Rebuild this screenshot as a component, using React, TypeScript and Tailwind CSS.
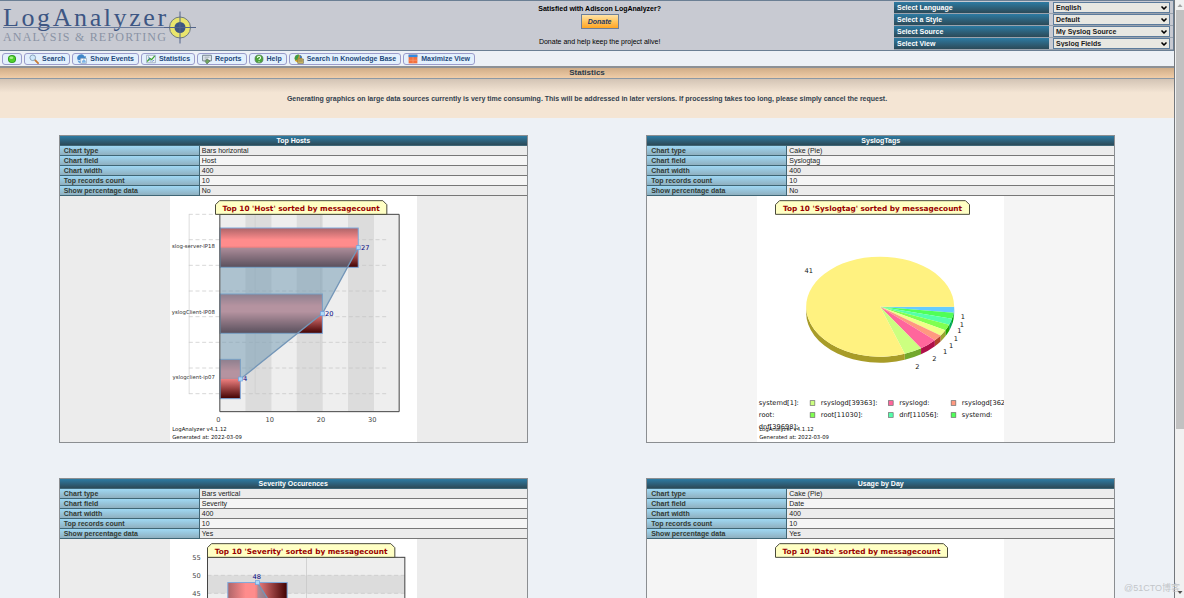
import type { ReactNode } from 'react';
import { ChevronDown } from 'lucide-react';

// Toolbar icons, drawn on a 16x16 grid
const icons: Record<string, ReactNode> = {
  dot: (
    <>
      <circle cx="8" cy="8" r="6.5" fill="#2f9e1c" />
      <circle cx="8" cy="8" r="5" fill="#4fd02c" />
      <ellipse cx="7" cy="6" rx="3" ry="2" fill="#a5f08a" />
    </>
  ),
  search: (
    <>
      <path d="M9 9l5.5 5.5" stroke="#c97b35" strokeWidth="3" strokeLinecap="round" />
      <circle cx="6" cy="6" r="4.5" fill="#cfe8fa" stroke="#8aa4bd" strokeWidth="1.6" />
    </>
  ),
  events: (
    <>
      <path d="M1 9a6 6 0 0 1 11-5l2-1v6H8l2-2a3.500 3.500 0 0 0-5 3z" fill="#3f86c8" />
      <path d="M6 7h9v8H6z" fill="#fff" stroke="#7f95ab" />
      <path d="M8 14v-3l3-3 3 3v3z" fill="#7db4e6" />
      <path d="M1 10a5 5 0 0 0 4 5l1-3z" fill="#6aa6dc" />
    </>
  ),
  stats: (
    <>
      <path d="M1 2h14v12H1z" fill="#f4f8fc" stroke="#7b8fa3" />
      <path d="M2 12l4-5 3 2 5-6" fill="none" stroke="#3da535" strokeWidth="2" />
      <path d="M4 4l3 8M9 12l4-2" fill="none" stroke="#4d79b8" strokeWidth="1.300" />
    </>
  ),
  reports: (
    <>
      <path d="M1 2h14v9H1z" fill="#e6edf2" stroke="#6f7f8c" strokeWidth="1.500" />
      <path d="M4 5h8M4 8h5" stroke="#6f7f8c" />
      <path d="M8 8l5 3-5 5-3-4z" fill="#6fa560" stroke="#5d6f5c" />
    </>
  ),
  help: (
    <>
      <circle cx="8" cy="8" r="6.500" fill="#4ba53a" stroke="#5c7460" />
      <path d="M5.500 6.500c0-3.500 5-3.500 5-.5 0 2-2.500 2-2.500 3.500M8 11.500v1.500" fill="none" stroke="#e8ffe0" strokeWidth="1.700" />
    </>
  ),
  knowledge: (
    <>
      <circle cx="7" cy="7" r="6" fill="#f0a818" />
      <path d="M1 7a6 6 0 0 1 7-6l-1 5-4 5z" fill="#3a9c4c" />
      <path d="M9 1a6 6 0 0 1 4 5l-4 1z" fill="#3c78c4" />
      <path d="M6 8h9v7H6z" fill="#f1d36b" stroke="#5a5c4a" />
      <path d="M7 10h7M7 12.500h7" stroke="#5a5c4a" />
    </>
  ),
  maximize: (
    <>
      <path d="M1 1h14v14H1z" fill="#f4703c" />
      <path d="M1 1h14v4H1z" fill="#2f8ae0" />
      <path d="M8 5v10M1 10h14" stroke="#f9a07c" />
    </>
  ),
};

const menu = [
  { icon: 'dot', label: '' },
  { icon: 'search', label: 'Search' },
  { icon: 'events', label: 'Show Events' },
  { icon: 'stats', label: 'Statistics' },
  { icon: 'reports', label: 'Reports' },
  { icon: 'help', label: 'Help' },
  { icon: 'knowledge', label: 'Search in Knowledge Base' },
  { icon: 'maximize', label: 'Maximize View' },
];

const selectors = [
  { id: 'language', label: 'Select Language', value: 'English' },
  { id: 'style', label: 'Select a Style', value: 'Default' },
  { id: 'source', label: 'Select Source', value: 'My Syslog Source' },
  { id: 'view', label: 'Select View', value: 'Syslog Fields' },
];

function Logo() {
  return (
    <svg width="200" height="49" viewBox="0 0 200 49" aria-label="LogAnalyzer">
      <text x="3" y="25" fill="#3d5683" fontSize="26" className="font-['Liberation_Serif',serif] tracking-widest">
        LogAnalyzer
      </text>
      <text x="3" y="40" fill="#8a93a5" fontSize="12" className="font-['Liberation_Serif',serif] tracking-widest">
        ANALYSIS &amp; REPORTING
      </text>
      <path d="M3 26.500H170" stroke="#6b7c9c" />
      <circle cx="180" cy="26.500" r="10.500" fill="#e9e56c" stroke="#6f7b80" />
      <circle cx="180" cy="26.500" r="5.500" fill="#3d5683" />
      <path d="M164 26.500h32M180 10.500v32" stroke="#53658a" />
    </svg>
  );
}

function Header() {
  return (
    <header className="flex h-[51px] border-t border-b border-[#6b7f94] bg-[#c8cad2]">
      <div className="w-[26%] shrink-0">
        <Logo />
      </div>
      <div className="flex flex-1 flex-col items-center pt-[3px] text-black">
        <p className="font-bold leading-[10px]">Satisfied with Adiscon LogAnalyzer?</p>
        <button className="h-[15px] w-[38px] border border-[#6d7f99] bg-linear-to-b from-[#ffe3a6] via-[#ffc45a] to-[#ffa51f] font-bold italic leading-none text-[#1d3766]">
          Donate
        </button>
        <p className="mt-2 leading-[10px]">Donate and help keep the project alive!</p>
      </div>
      <div className="grid w-[280px] shrink-0 grid-rows-4 border-r border-[#6b7f94] pt-px">
        {selectors.map((s) => (
          <div key={s.id} className="flex items-stretch gap-1 border-b border-[#9aa3ae] pr-[3px]">
            <label
              htmlFor={s.id}
              className="flex flex-1 items-center bg-linear-to-b from-[#2c7ba3] to-[#2b4a58] pl-[3px] font-bold leading-none text-white"
            >
              {s.label}
            </label>
            <div className="relative w-[117px]">
              <select
                id={s.id}
                className="block h-full w-full appearance-none border border-[#5c7c9c] bg-[#e8e8e2] pl-[2px] font-bold leading-none text-[#1a1a1a]"
              >
                <option>{s.value}</option>
              </select>
              <ChevronDown className="pointer-events-none absolute top-[2px] right-[2px] size-2 text-black" strokeWidth={5} />
            </div>
          </div>
        ))}
      </div>
    </header>
  );
}

function Toolbar() {
  return (
    <nav className="flex h-[15px] items-center gap-[2px] pl-[2px] leading-none">
      {menu.map((m) => (
        <a
          key={m.icon}
          href="#"
          aria-label={m.label || 'Status'}
          className="flex h-3 items-center gap-[3px] rounded-[3px] border border-[#9a9ccb] bg-[#e3f0fd] px-1 font-bold whitespace-nowrap text-[#1f4a7c]"
        >
          <svg viewBox="0 0 16 16" className="size-[10px] shrink-0">
            {icons[m.icon]}
          </svg>
          {m.label}
        </a>
      ))}
    </nav>
  );
}

function ChartTitle({ x, width, children }: { x: number; width: number; children: string }) {
  return (
    <>
      <path
        d={`M${x} 27.500V13l6-6h${width - 12}l6 6v14.500z`}
        fill="#ffffc4"
        stroke="#4a4a3a"
        strokeWidth="1.500"
      />
      <text x={x + width / 2} y="23" fontSize="11" fontWeight="bold" textAnchor="middle" fill="#990000">
        {children}
      </text>
    </>
  );
}

function ChartFooter() {
  return (
    <g fontSize="8" fill="#111">
      <text x="3" y="353">LogAnalyzer v4.1.12</text>
      <text x="3" y="364">Generated at: 2022-03-09</text>
    </g>
  );
}

function HostsChart() {
  const bars = [
    { name: 'slog-server-IP18', value: 27, y: 48 },
    { name: 'yslogClient-IP08', value: 20, y: 147 },
    { name: 'yslogclient-ip07', value: 4, y: 245 },
  ];
  const px = (v: number) => 74.5 + v * 7.69;

  return (
    <>
      <defs>
        <linearGradient id="barDown" x1="0" y1="0" x2="0" y2="1">
          <stop offset="0" stopColor="#ad6468" />
          <stop offset="0.3" stopColor="#ff8c8c" />
          <stop offset="0.45" stopColor="#ff8c8c" />
          <stop offset="1" stopColor="#400000" />
        </linearGradient>
      </defs>
      <path d="M74.500 27.500h269v296h-269z" fill="#eee" />
      {[5, 15, 25].map((v) => (
        <rect key={v} x={px(v)} y="27.500" width="39" height="296" fill="#dcdcdc" />
      ))}
      <path d="M28.500 27.500v269M127.500 27.500v269M226 27.500v269" stroke="#ccc" />
      {[27.5, 65.5, 104, 142.5, 181, 219.5, 258, 296.5].map((y) => (
        <path key={y} d={`M28 ${y}h296`} stroke="#c4c4c4" strokeDasharray="6 4" />
      ))}
      {bars.map((b) => (
        <rect
          key={b.name}
          x="75"
          y={b.y}
          width={px(b.value) - 75}
          height="59"
          fill="url(#barDown)"
          stroke="#7fa9dc"
          strokeWidth="1.500"
        />
      ))}
      <path d="M75 77.500H282L228.500 176 105.500 274.500H75z" fill="#7299b2" fillOpacity="0.52" />
      <path d="M282 77.500L228.500 176 105.500 274.500" fill="none" stroke="#7496b8" strokeWidth="2" />
      <path d="M74.500 27.500h269v296h-269z" fill="none" stroke="#444" strokeWidth="1.500" />
      {bars.map((b) => (
        <g key={b.name}>
          <rect x={px(b.value) - 3} y={b.y + 26.5} width="6" height="6" fill="#add8f6" stroke="#6c9ee0" />
          <text x={px(b.value) + 4} y={b.y + 33} fontSize="10" fill="#00007f">
            {b.value}
          </text>
          <text x="67" y={b.y + 30} fontSize="8" textAnchor="end" fill="#333">
            {b.name}
          </text>
        </g>
      ))}
      {[0, 10, 20, 30].map((v) => (
        <text key={v} x={px(v) - 2} y="339" fontSize="10" textAnchor="middle" fill="#444">
          {v}
        </text>
      ))}
      <ChartTitle x={68} width={257}>
        Top 10 'Host' sorted by messagecount
      </ChartTitle>
      <ChartFooter />
    </>
  );
}

// Slices run clockwise from three o'clock
const slices = [
  { value: 1, color: '#66ccff', side: '#1f86b8', lx: 308.5, ly: 181 },
  { value: 1, color: '#50ff58', side: '#00a80c', lx: 307, ly: 192 },
  { value: 1, color: '#55ffaa', side: '#00a858', lx: 303.5, ly: 202 },
  { value: 1, color: '#80ff50', side: '#22a400', lx: 298, ly: 213.5 },
  { value: 1, color: '#f0ff88', side: '#9ca430', lx: 291, ly: 223.5 },
  { value: 1, color: '#ff9980', side: '#b0452c', lx: 282, ly: 233 },
  { value: 2, color: '#ff669c', side: '#b00f4a', lx: 266, ly: 244 },
  { value: 2, color: '#ccff80', side: '#72a82c', lx: 240.5, ly: 256 },
  { value: 41, color: '#fff280', side: '#a89c28', lx: 77.5, ly: 112 },
];

const CX = 184.5;
const CY = 166;
const RX = 111;
const RY = 75;

function edge(angle: number, drop = 0) {
  return `${CX + RX * Math.cos(angle)} ${CY + RY * Math.sin(angle) + drop}`;
}

function TagsChart() {
  const total = slices.reduce((sum, s) => sum + s.value, 0);
  let turn = 0;
  const arcs = slices.map((s) => {
    const start = (turn / total) * 2 * Math.PI;
    turn += s.value;
    return { ...s, start, end: (turn / total) * 2 * Math.PI };
  });
  const legend = [
    [
      { text: 'systemd[1]:', color: '' },
      { text: 'rsyslogd[39363]:', color: '#ccff80' },
      { text: 'rsyslogd:', color: '#ff669c' },
      { text: 'rsyslogd[362', color: '#ff9980' },
    ],
    [
      { text: 'root:', color: '' },
      { text: 'root[11030]:', color: '#80ff50' },
      { text: 'dnf[11056]:', color: '#55ffaa' },
      { text: 'systemd:', color: '#50ff58' },
    ],
    [{ text: 'dnf[39698]:', color: '' }],
  ];
  const columns = [2.5, 95.5, 213, 307];

  return (
    <>
      {arcs.map((a) => {
        const end = Math.min(a.end, Math.PI);
        return (
          <path
            key={a.color}
            d={`M${edge(a.start)}A${RX} ${RY} 0 0 1 ${edge(end)}L${edge(end, 9)}A${RX} ${RY} 0 0 0 ${edge(a.start, 9)}z`}
            fill={a.side}
          />
        );
      })}
      {arcs.map((a) => (
        <path
          key={a.color}
          d={`M${CX} ${CY}L${edge(a.start)}A${RX} ${RY} 0 ${a.value > 25 ? 1 : 0} 1 ${edge(a.end)}z`}
          fill={a.color}
        />
      ))}
      {arcs.map((a) => (
        <text key={a.color} x={a.lx} y={a.ly + 4} fontSize="10" textAnchor="middle" fill="#111">
          {a.value}
        </text>
      ))}
      {legend.map((row, r) =>
        row.map((item, c) => (
          <g key={item.text}>
            {item.color && (
              <rect x={columns[c] - 16} y={307 + r * 18} width="7" height="7" fill={item.color} stroke="#666" />
            )}
            <text x={columns[c]} y={313.5 + r * 18} fontSize="10" fill="#111">
              {item.text}
            </text>
          </g>
        ))
      )}
      <ChartTitle x={27.5} width={291}>
        Top 10 'Syslogtag' sorted by messagecount
      </ChartTitle>
      <ChartFooter />
    </>
  );
}

function SeverityChart() {
  const ticks = [55, 50, 45, 40, 35, 30, 25, 20, 15, 10, 5, 0];
  const py = (v: number) => 27.5 + (55 - v) * 5.4;

  return (
    <>
      <defs>
        <linearGradient id="barAcross">
          <stop offset="0" stopColor="#ad6468" />
          <stop offset="0.3" stopColor="#ff8c8c" />
          <stop offset="0.45" stopColor="#ff8c8c" />
          <stop offset="1" stopColor="#400000" />
        </linearGradient>
      </defs>
      <rect x="56" y="27.500" width="296" height="297" fill="#eee" />
      {[50, 40, 30, 20, 10].map((v) => (
        <rect key={v} x="56" y={py(v)} width="296" height="27" fill="#dcdcdc" />
      ))}
      {ticks.map((v) => (
        <g key={v}>
          <path d={`M56 ${py(v)}h296`} stroke="#c4c4c4" strokeDasharray="6 4" />
          <text x="46" y={py(v) + 4} fontSize="10" textAnchor="end" fill="#444">
            {v}
          </text>
        </g>
      ))}
      <path d="M204.500 27.500v297" stroke="#c4c4c4" />
      <rect x="86.500" y={py(48)} width="89" height={py(0) - py(48)} fill="url(#barAcross)" stroke="#7fa9dc" strokeWidth="1.500" />
      <rect x="234.500" y={py(5)} width="89" height={py(0) - py(5)} fill="url(#barAcross)" stroke="#7fa9dc" strokeWidth="1.500" />
      <path d="M131 65.500L279 297.500V324.500H131z" fill="#7299b2" fillOpacity="0.52" />
      <path d="M131 65.500L279 297.500" stroke="#7496b8" strokeWidth="2" />
      <rect x="128" y="62.500" width="6" height="6" fill="#add8f6" stroke="#6c9ee0" />
      <text x="130" y="60" fontSize="10" textAnchor="middle" fill="#00007f">48</text>
      <rect x="56" y="27.500" width="296" height="297" fill="none" stroke="#444" strokeWidth="1.500" />
      <ChartTitle x={56} width={281}>
        Top 10 'Severity' sorted by messagecount
      </ChartTitle>
      <ChartFooter />
    </>
  );
}

function UsageChart() {
  return (
    <>
      <ChartTitle x={27.5} width={258}>
        Top 10 'Date' sorted by messagecount
      </ChartTitle>
      <ChartFooter />
    </>
  );
}

interface ChartCardProps {
  title: string;
  type: string;
  field: string;
  percentage: string;
  area: string;
  children: ReactNode;
}

function ChartCard({ title, type, field, percentage, area, children }: ChartCardProps) {
  const rows = [
    ['Chart type', type],
    ['Chart field', field],
    ['Chart width', '400'],
    ['Top records count', '10'],
    ['Show percentage data', percentage],
  ];

  return (
    <section className="mx-auto w-4/5 border border-[#8b8e91]">
      <table className="w-full table-fixed border-separate border-spacing-0 leading-[9px]">
        <colgroup>
          <col className="w-[30%]" />
          <col />
        </colgroup>
        <thead>
          <tr>
            <th
              colSpan={2}
              className="border-b border-[#3f6676] bg-linear-to-b from-[#2c7ba3] to-[#2b4a58] p-0 text-center font-bold text-white"
            >
              {title}
            </th>
          </tr>
        </thead>
        <tbody>
          {rows.map(([label, value]) => (
            <tr key={label} className="odd:bg-[#ececec] even:bg-[#f5f5f5]">
              <th
                scope="row"
                className="border-r border-b border-[#3f6676] bg-linear-to-b from-[#9fd8f4] to-[#8fb0c0] py-0 pr-0 pl-1 text-left font-bold text-[#333a33]"
              >
                {label}
              </th>
              <td className="border-b border-[#777] py-0 pr-0 pl-[2px] text-[#222]">{value}</td>
            </tr>
          ))}
        </tbody>
      </table>
      <div className={area}>
        <svg
          viewBox="0 0 370 369"
          className="mx-auto block h-[246px] w-[247px] bg-white font-['DejaVu_Sans',sans-serif]"
          role="img"
          aria-label={title}
        >
          {children}
        </svg>
      </div>
    </section>
  );
}

function Scrollbar() {
  return (
    <div className="flex w-[10px] shrink-0 flex-col items-center border-l border-[#73777c] bg-[#f1f1f1]">
      <svg viewBox="0 0 8 10" className="h-[10px] w-2 shrink-0">
        <path d="M1.500 7L4 4l2.500 3z" fill="#a3a3a3" />
      </svg>
      <div className="h-[70%] w-2 bg-[#c1c1c1]" />
      <svg viewBox="0 0 8 10" className="mt-auto h-[10px] w-2 shrink-0">
        <path d="M1.500 3L4 6l2.500-3z" fill="#505050" />
      </svg>
    </div>
  );
}

export default function App() {
  return (
    <div className="relative flex h-screen bg-[#edf1f6] font-['Liberation_Sans',Arial,sans-serif] text-[7px]">
      <div className="min-w-0 flex-1 overflow-x-hidden overflow-y-auto [scrollbar-width:none]">
        <Header />
        <Toolbar />
        <h1 className="border-t-2 border-b border-t-[#8d9196] border-b-[#8b98a5] bg-linear-to-b from-[#d0ad88] to-[#f0cda8] text-center text-[8px] leading-[10px] font-bold text-[#2b3a4a]">
          Statistics
        </h1>
        <div className="bg-[#f4e5d4]">
          <p className="bg-linear-to-b from-[#d3c4b5] to-transparent to-35% py-[15px] text-center leading-[9px] font-bold text-[#33424f]">
            Generating graphics on large data sources currently is very time consuming. This will be addressed in later
            versions. If processing takes too long, please simply cancel the request.
          </p>
        </div>
        <main className="grid grid-cols-2 gap-x-px gap-y-[35px] py-[17px]">
          <ChartCard title="Top Hosts" type="Bars horizontal" field="Host" percentage="No" area="bg-[#ececec]">
            <HostsChart />
          </ChartCard>
          <ChartCard title="SyslogTags" type="Cake (Pie)" field="Syslogtag" percentage="No" area="bg-[#f5f5f5]">
            <TagsChart />
          </ChartCard>
          <ChartCard title="Severity Occurences" type="Bars vertical" field="Severity" percentage="Yes" area="bg-[#ececec]">
            <SeverityChart />
          </ChartCard>
          <ChartCard title="Usage by Day" type="Cake (Pie)" field="Date" percentage="Yes" area="bg-[#f5f5f5]">
            <UsageChart />
          </ChartCard>
        </main>
      </div>
      <Scrollbar />
      <span className="absolute right-1 bottom-1 font-['Liberation_Sans','Noto_Sans_CJK_SC',sans-serif] text-[9px] leading-3 text-[#c2c5c9]">
        @51CTO博客
      </span>
    </div>
  );
}
